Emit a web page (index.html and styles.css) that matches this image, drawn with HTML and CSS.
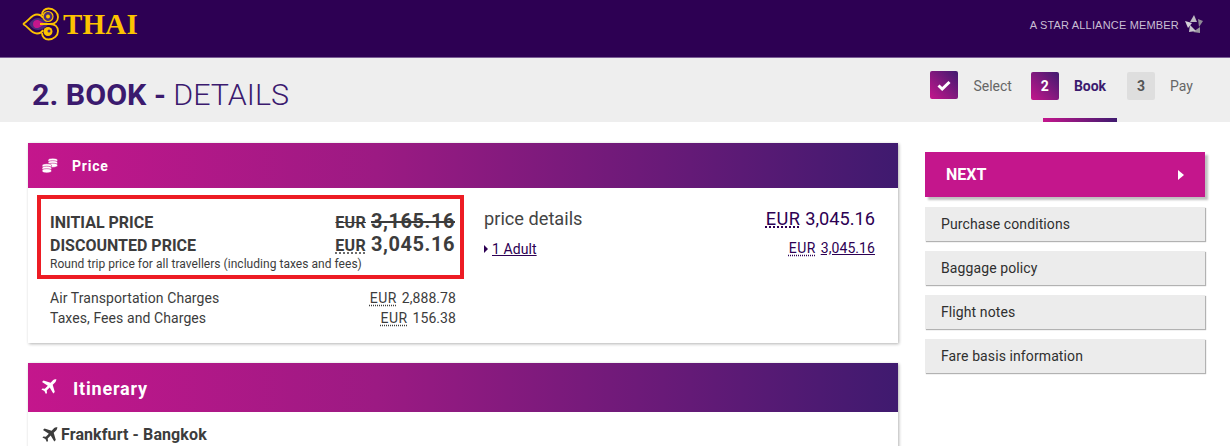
FILE: index.html
```html
<!DOCTYPE html>
<html lang="en">
<head>
<meta charset="utf-8">
<title>Book details</title>
<link rel="stylesheet" href="styles.css">
</head>
<body>
<header class="topbar">
  <div class="brand">
    <svg class="logo" width="38" height="36" viewBox="0 0 38 36" fill="none">
      <path d="M1 18 C7 15 9 8.500 15 8.500 C18 8.500 20 10 21 12 M1 18 C7 21 9 27.500 15 27.500 C18 27.500 20 26 21 24" stroke="#fdc300" stroke-width="1.8"/>
      <path d="M7 18 C9 15 12 12 16 12 C20 12 24 15 27 18 C24 21 20 24 16 24 C12 24 9 21 7 18Z" fill="#4b2a7a"/>
      <path d="M11 18 C11 14.500 14 13.500 16 14 C19 15 21 17 24 18 C21 19 19 21 16 22 C14 22.500 11 21.500 11 18Z" fill="#c4168c"/>
      <path d="M20 9 C20 5 23 2.500 26.500 2.500 C32 2.500 36 6.500 36 11 C36 15 33 18 28 18 L18 18 M20 27 C20 31 23 33.500 26.500 33.500 C32 33.500 36 29.500 36 25 C36 21 33 18 28 18" stroke="#fdc300" stroke-width="1.8"/>
      <circle cx="26" cy="10.500" r="5" fill="#4b2a7a" stroke="#fdc300" stroke-width="1.200"/>
      <circle cx="26" cy="10.500" r="2" fill="#fdc300"/>
      <circle cx="26" cy="25.500" r="4.500" fill="#fdc300"/>
      <circle cx="27" cy="25" r="1.500" fill="#4b2a7a"/>
    </svg>
    <span class="brand-name">THAI</span>
  </div>
  <div class="alliance">
    <span>A STAR ALLIANCE MEMBER</span>
    <svg width="18" height="19" viewBox="0 0 18 19">
      <path d="M9 0 L12 7 L5 7Z" fill="#bdbac1"/>
      <path d="M13 4 L18 6 L14 12Z" fill="#8f8a96"/>
      <path d="M15 12 L15 18 L8 17Z" fill="#9a96a0"/>
      <path d="M5 10 L11 16 L4 17Z" fill="#c8c5cc"/>
      <path d="M0 6 L7 8 L3 13Z" fill="#d6d3d9"/>
    </svg>
  </div>
</header>

<section class="titlebar">
  <h1 class="title"><b>2. BOOK -</b> DETAILS</h1>
  <ol class="steps">
    <li class="step step-first">
      <span class="badge badge-on">
        <svg width="14" height="11" viewBox="0 0 14 11"><path d="M1.500 5.500 L5.200 9 L12.500 2" fill="none" stroke="#fff" stroke-width="3"/></svg>
      </span>
      <span class="step-label">Select</span>
    </li>
    <li class="step step-current">
      <span class="badge badge-on">2</span>
      <span class="step-label">Book</span>
    </li>
    <li class="step">
      <span class="badge">3</span>
      <span class="step-label">Pay</span>
    </li>
  </ol>
</section>

<main class="layout">
  <div class="content">
    <section class="card">
      <h2 class="card-head">
        <svg class="head-icon" width="16" height="15" viewBox="0 0 16 15" fill="#fff" stroke="#c0178c" stroke-width="0.6">
          <ellipse cx="10.800" cy="2.300" rx="4.800" ry="2.100"/>
          <ellipse cx="10.800" cy="4.800" rx="4.800" ry="2.100"/>
          <ellipse cx="10.800" cy="7.300" rx="4.800" ry="2.100"/>
          <ellipse cx="4.800" cy="7.800" rx="4.800" ry="2.100"/>
          <ellipse cx="4.800" cy="10.300" rx="4.800" ry="2.100"/>
          <ellipse cx="4.800" cy="12.800" rx="4.800" ry="2.100"/>
        </svg>
        <span>Price</span>
      </h2>
      <div class="price-body">
        <div class="price-left">
          <div class="highlight">
            <div class="row row-big">
              <span>INITIAL PRICE</span>
              <span class="amount"><abbr class="cur cur-big strike">EUR</abbr><s class="num-big">3,165.16</s></span>
            </div>
            <div class="row row-big">
              <span>DISCOUNTED PRICE</span>
              <span class="amount"><abbr class="cur cur-big">EUR</abbr><span class="num-big">3,045.16</span></span>
            </div>
            <p class="note">Round trip price for all travellers (including taxes and fees)</p>
          </div>
          <div class="charges">
            <div class="row"><span>Air Transportation Charges</span><span class="amount"><abbr class="cur cur-gap">EUR</abbr>2,888.78</span></div>
            <div class="row"><span>Taxes, Fees and Charges</span><span class="amount"><abbr class="cur cur-gap">EUR</abbr>156.38</span></div>
          </div>
        </div>
        <div class="price-right">
          <div class="row details-head">
            <span class="details-title">price details</span>
            <span class="details-total"><abbr class="cur cur-gap">EUR</abbr>3,045.16</span>
          </div>
          <div class="row details-line">
            <span class="adult"><i class="tri"></i><a href="#">1 Adult</a></span>
            <span><abbr class="cur cur-gap">EUR</abbr><a href="#">3,045.16</a></span>
          </div>
        </div>
      </div>
    </section>

    <section class="card">
      <h2 class="card-head card-head-lg">
        <svg class="head-icon plane-shift" width="16" height="16" viewBox="0 0 16 16" fill="#fff"><path d="M15.500.5c-1-.7-2.400-.3-3.300.6L9.600 3.700 2.500 1.600 1 3.100l5.800 3.600-3 3-2.300-.3L.4 10.500l3 1.500 1.500 3 1.100-1.100-.3-2.300 3-3 3.600 5.800 1.500-1.500-2.100-7.100 2.600-2.600c.9-.9 1.300-2.300.7-3.700z"/></svg>
        <span>Itinerary</span>
      </h2>
      <div class="itin-body">
        <svg width="16" height="16" viewBox="0 0 16 16" fill="#3c3c3c"><path d="M15.500.5c-1-.7-2.400-.3-3.300.6L9.600 3.700 2.500 1.600 1 3.100l5.800 3.600-3 3-2.300-.3L.4 10.500l3 1.500 1.500 3 1.100-1.100-.3-2.300 3-3 3.600 5.800 1.500-1.500-2.100-7.100 2.600-2.600c.9-.9 1.300-2.300.7-3.700z"/></svg>
        <span>Frankfurt - Bangkok</span>
      </div>
    </section>
  </div>

  <aside class="side">
    <a class="next" href="#"><span>NEXT</span><i class="next-tri"></i></a>
    <a class="side-link" href="#">Purchase conditions</a>
    <a class="side-link" href="#">Baggage policy</a>
    <a class="side-link" href="#">Flight notes</a>
    <a class="side-link" href="#">Fare basis information</a>
  </aside>
</main>
</body>
</html>
```
FILE: styles.css
```css
* { box-sizing: border-box; }
html, body { height: 446px; overflow: hidden; }
body { margin: 0; background: #fff; font-family: Roboto, "Liberation Sans", sans-serif; color: #3c3c3c; }

.topbar {
  height: 58px;
  background: #2d0053;
  border-bottom: 1px solid #7b5e96;
  display: flex;
  justify-content: space-between;
  align-items: flex-start;
  padding: 6px 27px 0 22px;
}
.brand { display: flex; align-items: center; gap: 3px; }
.logo { display: block; }
.brand-name {
  font-family: "Liberation Serif", serif;
  font-weight: 700;
  font-size: 29px;
  line-height: 36px;
  color: #fdc300;
  letter-spacing: 0.2px;
}
.alliance {
  display: flex;
  align-items: center;
  gap: 6px;
  margin-top: 9px;
  font-family: "Liberation Sans", sans-serif;
  font-size: 11px;
  letter-spacing: 0.18px;
  color: #c9bfd4;
}

.titlebar {
  height: 64px;
  background: #eeeeee;
  display: flex;
  justify-content: space-between;
  padding: 0 37px 0 32px;
}
.title {
  margin: 19px 0 0;
  font-size: 30.4px;
  line-height: 36px;
  font-weight: 300;
  color: #3b1a6e;
}
.title b { font-weight: 700; }
.steps { list-style: none; margin: 0; padding: 14px 0 0; display: flex; }
.step { display: flex; align-items: flex-start; height: 50px; font-size: 14px; color: #666; position: relative; }
.step-first .badge { margin-top: -1px; }
.step-current { color: #3b1a6e; font-weight: 700; padding-left: 12px; padding-right: 11px; margin-left: 7px; margin-right: 10px; }
.step-current::after {
  content: "";
  position: absolute;
  left: 24px;
  right: 0;
  bottom: 0;
  height: 4px;
  background: linear-gradient(90deg, #c4168c, #3f1a6f);
}
.badge {
  width: 28px;
  height: 28px;
  border-radius: 2px;
  background: #dedede;
  display: flex;
  align-items: center;
  justify-content: center;
  font-size: 14px;
  font-weight: 700;
  color: #555;
}
.badge-on { background: linear-gradient(45deg, #c4168c, #3f1a6f); color: #fff; }
.step-label { margin-left: 15px; line-height: 28px; }

.layout { display: flex; padding: 21px 0 0 28px; gap: 27px; }
.content { width: 870px; display: flex; flex-direction: column; gap: 20px; }
.card { background: #fff; box-shadow: 1px 1px 3px rgba(0,0,0,0.3); }
.card-head {
  margin: 0;
  height: 45px;
  padding: 0 14px;
  display: flex;
  align-items: center;
  gap: 14px;
  font-size: 14px;
  letter-spacing: 0.8px;
  color: #fff;
  font-weight: 700;
  background: linear-gradient(90deg, #c4168c, #9c1a83 40%, #3f1a6f);
}
.card-head-lg { height: 49px; font-size: 18px; gap: 16px; padding-top: 2px; }
.head-icon { display: block; }
.plane-shift { margin: -3px 0 0 -1px; }

.price-body { display: flex; height: 155px; }
.price-left { width: 427px; margin-left: 9px; margin-top: 7px; }
.highlight { border: 4px solid #ed1c24; height: 84px; padding: 11px 5px 0 9px; }
.row { display: flex; justify-content: space-between; align-items: baseline; }
.row-big { font-size: 16px; font-weight: 700; height: 23px; line-height: 23px; }
.amount { white-space: nowrap; }
.cur { text-decoration: underline dotted; text-underline-offset: 2px; font-weight: inherit; letter-spacing: 0.4px; }
.cur-gap { margin-right: 5px; }
.cur-big { font-size: 16px; font-weight: 700; letter-spacing: 0.3px; }
.strike { text-decoration: line-through; }
.num-big { font-size: 20px; font-weight: 700; letter-spacing: 0.55px; margin-left: 5px; }
.note { margin: 1px 0 0; font-size: 12px; line-height: 14px; letter-spacing: 0.035px; }
.charges { padding: 9px 8px 0 13px; font-size: 14px; line-height: 20px; letter-spacing: 0.08px; }

.price-right { width: 391px; margin-left: 20px; padding-top: 18px; color: #2d0053; }
.details-head { height: 24px; align-items: center; }
.details-title { font-size: 18.2px; color: #444; }
.details-total { font-size: 18.2px; }
.details-line { font-size: 14px; margin-top: 10px; }
.details-line a { color: #2d0053; letter-spacing: 0.08px; }
.adult { display: flex; align-items: center; }
.tri {
  width: 0;
  height: 0;
  border-left: 4px solid #2d0053;
  border-top: 4px solid transparent;
  border-bottom: 4px solid transparent;
  margin-right: 4px;
}

.itin-body {
  display: flex;
  align-items: center;
  gap: 3px;
  padding: 13px 14px 8px;
  font-size: 16px;
  font-weight: 700;
  line-height: 20px;
  letter-spacing: 0.1px;
}

.side { width: 280px; padding-top: 9px; display: flex; flex-direction: column; gap: 10px; }
.next {
  height: 45px;
  background: #c4168c;
  box-shadow: 3px 3px 2px rgba(0,0,0,0.25);
  color: #fff;
  font-weight: 700;
  font-size: 16px;
  text-decoration: none;
  display: flex;
  align-items: center;
  justify-content: space-between;
  padding: 0 21px;
}
.next-tri {
  width: 0;
  height: 0;
  border-left: 6px solid #fff;
  border-top: 5px solid transparent;
  border-bottom: 5px solid transparent;
}
.side-link {
  height: 34px;
  background: #ececec;
  box-shadow: 1px 1px 1px rgba(0,0,0,0.3);
  color: #2f2f2f;
  font-size: 14px;
  line-height: 34px;
  padding-left: 16px;
  letter-spacing: 0.1px;
  text-decoration: none;
}
```
